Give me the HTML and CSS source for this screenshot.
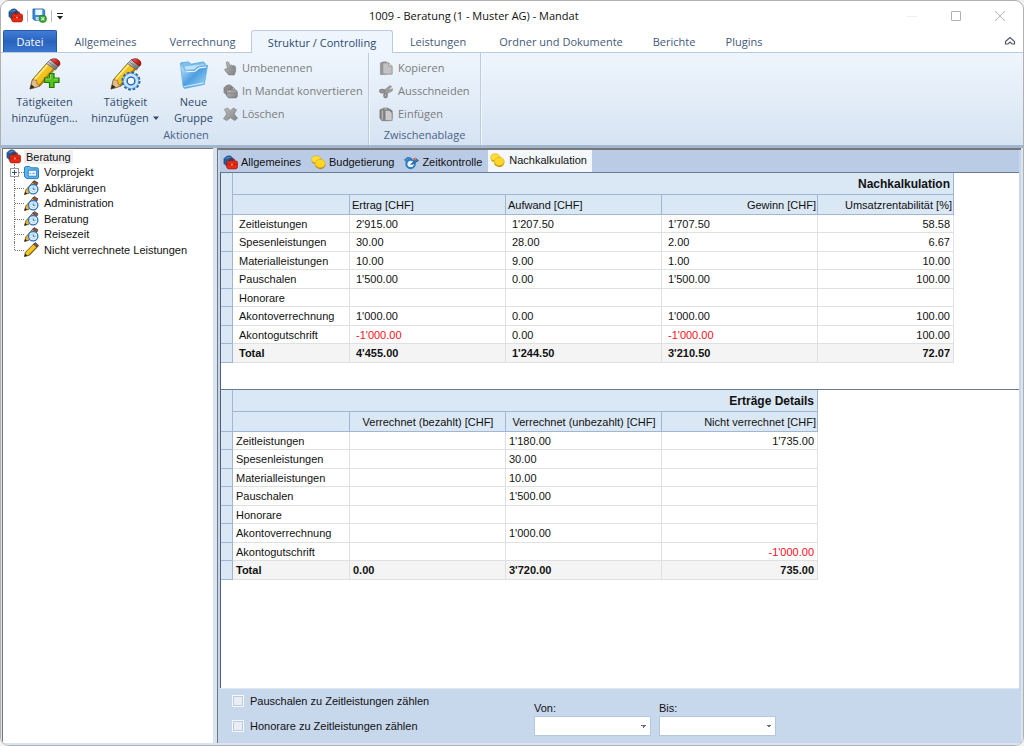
FILE: index.html
```
<!DOCTYPE html>
<html lang="de">
<head>
<meta charset="utf-8">
<title>1009 - Beratung (1 - Muster AG) - Mandat</title>
<link rel="stylesheet" href="styles.css">
</head>
<body>
<svg class="sprite" aria-hidden="true">
  <defs>
    <linearGradient id="g-yellow" x1="0" y1="0" x2="1" y2="1"><stop offset="0" stop-color="#ffe23c"/><stop offset="1" stop-color="#e3a106"/></linearGradient>
    <linearGradient id="g-metal" x1="0" y1="0" x2="1" y2="1"><stop offset="0" stop-color="#f4f4f4"/><stop offset="0.5" stop-color="#9b9b9b"/><stop offset="1" stop-color="#5d5d5d"/></linearGradient>
    <linearGradient id="g-red" x1="0" y1="0" x2="1" y2="1"><stop offset="0" stop-color="#f4776d"/><stop offset="0.5" stop-color="#d3261f"/><stop offset="1" stop-color="#95120e"/></linearGradient>
    <linearGradient id="g-folder" x1="0" y1="0" x2="1" y2="1"><stop offset="0" stop-color="#d3edfc"/><stop offset="0.5" stop-color="#4f9fe2"/><stop offset="1" stop-color="#a9dcfa"/></linearGradient>
    <linearGradient id="g-grey" x1="0" y1="0" x2="1" y2="1"><stop offset="0" stop-color="#bdbdbd"/><stop offset="1" stop-color="#808080"/></linearGradient>
    <symbol id="i-cases" viewBox="0 0 16 16">
      <path d="M1 4 L3 2 L5 1 L8 1 L10 3 L11 5 V10 L5 13 L1 9Z" fill="#1f5d9c" stroke="#123a68" stroke-width=".6"/>
      <path d="M3 3.500L8 2.500" stroke="#6fa8dc" stroke-width=".8"/>
      <path d="M7.500 6.500V5Q7.500 4.200 8.500 4.200h2.500q1 0 1 .9V6.500" fill="none" stroke="#8c1410" stroke-width="1.200"/>
      <path d="M4 7.500 Q4 6.500 5 6.300H14Q15.500 6.500 15.500 8V13Q15 14.800 13.500 14.800H6Q4.500 14.800 4 13Z" fill="#e92b12" stroke="#9c150b" stroke-width=".7"/>
      <path d="M4.500 9.800H15" stroke="#b51a0d"/><path d="M8.500 9.300h2v1.600h-2z" fill="#ff9a83"/>
    </symbol>
    <symbol id="i-pencil" viewBox="0 0 32 32">
      <path d="M1 31 L3.500 21.500 L18 5 L26 11 L11 28Z" fill="url(#g-yellow)" stroke="#6f5310" stroke-width=".8"/>
      <path d="M9.500 27 L24.500 10 L26 11 L11 28Z" fill="#b97d05"/>
      <path d="M5.500 21.500 L19 6.500" stroke="#fff29a" stroke-width="1.200"/>
      <path d="M1 31 L3.500 21.500 L7.500 22.500 L8 26 L11 28Z" fill="#e3c08b" stroke="#76552c" stroke-width=".6"/>
      <path d="M1 31 L2.200 26.500 L5.800 29.300Z" fill="#2b2b2b"/>
      <path d="M17.500 5.500 L21.500 1.500 L29.800 7.500 L26.500 12Z" fill="url(#g-metal)" stroke="#555" stroke-width=".7"/>
      <path d="M19.500 4L28 10.300" stroke="#666" stroke-width=".7"/>
      <path d="M21.500 1.800 Q24 0 27.500 1 Q31.500 3 31 6 Q30.500 8 29.300 8Z" fill="url(#g-red)" stroke="#7e1613" stroke-width=".7"/>
    </symbol>
    <symbol id="i-folder" viewBox="0 0 32 32">
      <path d="M2 3 L10 2 L13 4.500 L26 2 L28 4 L26 26 L7 29Z" fill="#7cc2ef" stroke="#4f9bd2" stroke-width=".8"/>
      <path d="M6 7 L27 4.500 L26 14 L8 16Z" fill="#bfe3f8"/>
      <path d="M1.500 3.500 L7 11 L16 10.500 L20 7 L30.500 5.500 L27 26 L6 30.300 Q4.500 30 4.300 28Z" fill="url(#g-folder)" stroke="#67afe0" stroke-width=".9"/>
      <path d="M7.500 12.500 L17 12 L21 8.500 L29 7.300" fill="none" stroke="#f0faff" stroke-width="1.200"/>
      <path d="M5 28.500L26 24.500" stroke="#d9f1ff"/>
    </symbol>
    <symbol id="i-task" viewBox="0 0 16 16">
      <path d="M0.500 15.500 L2 10.500 L10 1.500 L14 4.500 L5.500 14Z" fill="#e8b53a" stroke="#57451a" stroke-width=".8"/>
      <path d="M9 2.500 L11 .5 L15 3 L13.500 5.500Z" fill="#8a5548" stroke="#43251c" stroke-width=".6"/>
      <circle cx="9.800" cy="9.800" r="5" fill="#e5f3ff" stroke="#2877bf" stroke-width="1.400"/>
      <circle cx="9.800" cy="9.800" r="2.700" fill="none" stroke="#6da6da" stroke-width="1" stroke-dasharray="1 1.100"/>
      <path d="M9.800 8V10H11.500" stroke="#2668a4" fill="none"/>
      <path d="M0.500 15.500 L1.200 12.700 L3.500 14.700Z" fill="#222"/>
    </symbol>
    <symbol id="i-coins" viewBox="0 0 16 16">
      <path d="M1 5V7.500Q2 10 6 9.500L11 6V4Z" fill="#c99608"/>
      <ellipse cx="5.500" cy="4.600" rx="4.700" ry="3.800" fill="#ffdf38" stroke="#d8a60c" stroke-width=".6"/>
      <path d="M4.500 10V12Q6.500 15.600 11 14.800Q15.500 13.500 15.200 9.500Z" fill="#bd8508"/>
      <ellipse cx="9.800" cy="9" rx="5.400" ry="4.500" fill="#ffd52a" stroke="#d8a60c" stroke-width=".6"/>
    </symbol>
    <symbol id="i-clockcheck" viewBox="0 0 16 16">
      <path d="M.5 5L4 2.500L8 3.500L8 6L3 8Z" fill="#4a90cb" stroke="#235f98" stroke-width=".8"/>
      <circle cx="7" cy="9.500" r="4.500" fill="#eaf6ff" stroke="#2a7ec4" stroke-width="2.200"/>
      <path d="M7 10L13.500 4L15.500 6L10 9.500Z" fill="#3d77b0" stroke="#264f7c" stroke-width=".6"/>
      <path d="M9.500 4L12.500 2.500L11.500 6Z" fill="#e85030"/>
    </symbol>
  </defs>
</svg>

<div class="window">
  <header class="titlebar">
    <div class="quick">
      <svg class="ic16"><use href="#i-cases"/></svg>
      <span class="qsep"></span>
      <button class="plain" aria-label="Speichern und schliessen">
        <svg class="ic16" viewBox="0 0 16 16"><path d="M1 1H12L13.500 2.500V13H2.500L1 11.500Z" fill="#3b8bdc" stroke="#1c5695" stroke-width=".8"/><path d="M3.500 1.500h7.500v6H3.500z" fill="#e9f5ff"/><path d="M4 9.500h6v3.500H4z" fill="#bed8ef"/><circle cx="11.500" cy="11.500" r="4" fill="#35a535" stroke="#1f7b22" stroke-width=".7"/><path d="M9.800 9.800l3.400 3.400m0-3.400l-3.400 3.400" stroke="#d9f5d5" stroke-width="1.200"/></svg>
      </button>
      <span class="qsep"></span>
      <button class="plain" aria-label="Schnellzugriff anpassen"><svg class="ic8" viewBox="0 0 8 8"><path d="M1 1.500h6" stroke="#222"/><path d="M1 4h6L4 7.500z" fill="#222"/></svg></button>
    </div>
    <h1 class="title">1009 - Beratung (1 - Muster AG) - Mandat</h1>
    <div class="winbtns">
      <button class="plain" aria-label="Minimieren"><svg class="ic12" viewBox="0 0 12 12"><path d="M1 6.500h10" stroke="#eee"/></svg></button>
      <button class="plain" aria-label="Maximieren"><svg class="ic12" viewBox="0 0 12 12"><rect x="1.500" y="1.500" width="9" height="9" rx=".5" fill="none" stroke="#b0b0b0"/></svg></button>
      <button class="plain" aria-label="Schliessen"><svg class="ic12" viewBox="0 0 12 12"><path d="M1 1l10 10M11 1L1 11" stroke="#b5b5b5"/></svg></button>
    </div>
  </header>

  <nav class="tabs">
    <button class="tab file">Datei</button>
    <button class="tab w-l">Allgemeines</button>
    <button class="tab w-l">Verrechnung</button>
    <button class="tab w-xl active">Struktur / Controlling</button>
    <button class="tab w-m">Leistungen</button>
    <button class="tab w-xxl">Ordner und Dokumente</button>
    <button class="tab w-s">Berichte</button>
    <button class="tab w-s">Plugins</button>
    <button class="plain collapse" aria-label="Menüband minimieren"><svg class="ic12" viewBox="0 0 12 12"><path d="M1.500 6.500L6 2.500L10.500 6.500V9H8L6 7L4 9H1.500Z" fill="#fff" stroke="#4e5a6b" stroke-width="1.200"/></svg></button>
  </nav>

  <section class="ribbon">
    <div class="group actions">
      <div class="group-body">
        <button class="big b-wide">
          <svg class="ic34" viewBox="0 0 34 34"><use href="#i-pencil" width="32" height="32" x="1"/><path d="M21.500 15.500h4.500v4.500h5v4.500h-5v5h-4.500v-5h-5v-4.500h5z" fill="#52c51d" stroke="#237305" stroke-width="1.200"/><path d="M22.500 16.500v4.500h-5M26 21h4" fill="none" stroke="#9ae868" stroke-width=".8"/></svg>
          <span>Tätigkeiten<br>hinzufügen...</span>
        </button>
        <button class="big b-wide">
          <svg class="ic34" viewBox="0 0 34 34"><use href="#i-pencil" width="32" height="32" x="1"/><circle cx="22" cy="23" r="8" fill="#f1f8ff" stroke="#245f9f" stroke-width="3" stroke-dasharray="2.600 1.589"/><circle cx="22" cy="23" r="5.800" fill="none" stroke="#5ea5e4" stroke-width="4.400"/><circle cx="22" cy="23" r="6" fill="none" stroke="#cbe6fb" stroke-width="2.400"/><circle cx="22" cy="23" r="3.700" fill="#f3f6fa" stroke="#235f9f" stroke-width="1.100"/></svg>
          <span>Tätigkeit<br>hinzufügen <svg class="ic8" viewBox="0 0 8 8"><path d="M1 2.500h6L4 6z" fill="#2f486c"/></svg></span>
        </button>
        <button class="big b-narrow">
          <svg class="ic34" viewBox="0 0 34 34"><use href="#i-folder" width="30" height="32" x="2" y="1"/></svg>
          <span>Neue<br>Gruppe</span>
        </button>
        <div class="small-list">
          <button class="small" disabled><svg class="ic16" viewBox="0 0 16 16"><path d="M3.500 1.500Q4.500 0 6 1.500L7.500 5L9 4.200L10.500 5L12 4.800L13.500 6.500V11L12 14.800H6L2 10Q1.500 8.500 3 8L5 9Z" fill="url(#g-grey)" stroke="#808080" stroke-width=".7"/><path d="M8 5.500v3M10.300 5.500v3M12 6v2.500" stroke="#7d7d7d" stroke-width=".6"/></svg>Umbenennen</button>
          <button class="small" disabled><svg class="ic16" viewBox="0 0 16 16"><path d="M1 4L3 2L5 1L8 1L10 3L11 10L5 13L1 9Z" fill="#8c8c8c" stroke="#777" stroke-width=".6"/><path d="M7.500 6.500V5q0-1 1-1h2.500q1 0 1 1v1.500" fill="none" stroke="#777"/><path d="M4 7.500Q4 6.500 5 6.300H13.500Q15.300 7 15.300 9V13L14 14.800H6L4 13Z" fill="url(#g-grey)" stroke="#777" stroke-width=".7"/><path d="M4.500 9.800H15" stroke="#808080"/></svg>In Mandat konvertieren</button>
          <button class="small" disabled><svg class="ic16" viewBox="0 0 16 16"><path d="M1.500 2.500L5 1L8 4L11 1L14.500 3L12 7.500L15.500 12L12.500 14.500L8 11.500L4 14.500L.5 12.500L4 7.500Z" fill="url(#g-grey)" stroke="#858585" stroke-width=".7"/></svg>Löschen</button>
        </div>
      </div>
      <div class="group-name">Aktionen</div>
    </div>
    <div class="group clipboard">
      <div class="group-body">
        <div class="small-list">
          <button class="small" disabled><svg class="ic16" viewBox="0 0 16 16"><path d="M1.500 2Q5 .5 8 1V14L1.500 14.500Z" fill="#9a9a9a" stroke="#888" stroke-width=".7"/><path d="M4 2H10.500L14 5.500V14H4Z" fill="#c3c3c3" stroke="#888" stroke-width=".8"/><path d="M10.500 2v3.500h3.500" fill="#eee" stroke="#888" stroke-width=".8"/></svg>Kopieren</button>
          <button class="small" disabled><svg class="ic16" viewBox="0 0 16 16"><path d="M5.500 6.500L12 1.500L13.500 3L9 7L14.500 5L14 7.500L8 10.500Z" fill="#a0a0a0" stroke="#808080" stroke-width=".6"/><ellipse cx="3.500" cy="7.500" rx="2.400" ry="1.500" fill="#bbb" stroke="#888" stroke-width="2"/><ellipse cx="7" cy="12" rx="1.500" ry="2.300" fill="#bbb" stroke="#888" stroke-width="2"/></svg>Ausschneiden</button>
          <button class="small" disabled><svg class="ic16" viewBox="0 0 16 16"><path d="M1 3L5 1.500H10L14 4V12L10 14.500H3L1 12Z" fill="#858585" stroke="#6c6c6c" stroke-width=".7"/><path d="M3.500 3.500v10" stroke="#ccc"/><path d="M6.500 3.500H11L14 6.500V14.500H6.500Z" fill="#cbcbcb" stroke="#777" stroke-width=".7"/><path d="M5 1h4v2.500H5z" fill="#aaa" stroke="#777" stroke-width=".5"/></svg>Einfügen</button>
        </div>
      </div>
      <div class="group-name">Zwischenablage</div>
    </div>
  </section>

  <main class="content">
    <aside class="tree">
      <div class="root"><svg class="ic14"><use href="#i-cases"/></svg><span class="root-label">Beratung</span></div>
      <ul class="nodes">
        <li><svg class="expander" viewBox="0 0 9 9"><rect x=".5" y=".5" width="8" height="8" fill="#fff" stroke="#999"/><path d="M2 4.500h5M4.500 2v5" stroke="#33507c"/></svg><svg class="ic14" viewBox="0 0 16 16"><path d="M.5 3Q.5 2 2 1.500H6L7.500 3H14Q15.500 3 15.500 5V13Q15.500 14.500 14 14.500H3L.5 12.500Z" fill="#62b5ed" stroke="#1e76bd"/><path d="M4.500 5.500H13.500v6.500H4.500z" fill="#e9f6ff" stroke="#2980cc"/><path d="M6 9h1.500M9 9h2.500" stroke="#5a8fe0"/></svg>Vorprojekt</li>
        <li><svg class="ic14"><use href="#i-task"/></svg>Abklärungen</li>
        <li><svg class="ic14"><use href="#i-task"/></svg>Administration</li>
        <li><svg class="ic14"><use href="#i-task"/></svg>Beratung</li>
        <li><svg class="ic14"><use href="#i-task"/></svg>Reisezeit</li>
        <li><svg class="ic14" viewBox="0 0 16 16"><path d="M.5 15.500L1.500 11L11 1.500L15 4.500L6 14Z" fill="#f3c824" stroke="#5b4a14" stroke-width=".9"/><path d="M5 14L14 5" stroke="#7a5a10"/><path d="M10 2.500L12 .5L15.500 3.500L13.800 5.500Z" fill="#7a5a4a" stroke="#3b241a" stroke-width=".6"/><path d="M.5 15.500L1.200 12.500L3.600 14.700Z" fill="#222"/></svg>Nicht verrechnete Leistungen</li>
      </ul>
    </aside>

    <section class="panel">
      <nav class="subtabs">
        <button class="subtab"><svg class="ic16"><use href="#i-cases"/></svg>Allgemeines</button>
        <button class="subtab"><svg class="ic16"><use href="#i-coins"/></svg>Budgetierung</button>
        <button class="subtab"><svg class="ic16"><use href="#i-clockcheck"/></svg>Zeitkontrolle</button>
        <button class="subtab current"><svg class="ic16"><use href="#i-coins"/></svg>Nachkalkulation</button>
      </nav>

      <div class="sheet first">
        <table class="grid summary">
          <colgroup><col class="c-sel"><col class="c-name"><col class="c-val"><col class="c-val"><col class="c-val"><col class="c-pct"></colgroup>
          <thead>
            <tr class="band"><th rowspan="2"></th><th colspan="5">Nachkalkulation</th></tr>
            <tr class="heads"><th></th><th>Ertrag [CHF]</th><th>Aufwand [CHF]</th><th class="r">Gewinn [CHF]</th><th class="r">Umsatzrentabilität [%]</th></tr>
          </thead>
          <tbody>
            <tr><th></th><td>Zeitleistungen</td><td>2'915.00</td><td>1'207.50</td><td>1'707.50</td><td class="r">58.58</td></tr>
            <tr><th></th><td>Spesenleistungen</td><td>30.00</td><td>28.00</td><td>2.00</td><td class="r">6.67</td></tr>
            <tr><th></th><td>Materialleistungen</td><td>10.00</td><td>9.00</td><td>1.00</td><td class="r">10.00</td></tr>
            <tr><th></th><td>Pauschalen</td><td>1'500.00</td><td>0.00</td><td>1'500.00</td><td class="r">100.00</td></tr>
            <tr><th></th><td>Honorare</td><td></td><td></td><td></td><td></td></tr>
            <tr><th></th><td>Akontoverrechnung</td><td>1'000.00</td><td>0.00</td><td>1'000.00</td><td class="r">100.00</td></tr>
            <tr><th></th><td>Akontogutschrift</td><td class="neg">-1'000.00</td><td>0.00</td><td class="neg">-1'000.00</td><td class="r">100.00</td></tr>
            <tr class="total"><th></th><td>Total</td><td>4'455.00</td><td>1'244.50</td><td>3'210.50</td><td class="r">72.07</td></tr>
          </tbody>
        </table>
      </div>

      <div class="sheet second">
        <table class="grid details">
          <colgroup><col class="c-sel"><col class="c-name"><col class="c-val"><col class="c-val"><col class="c-val"></colgroup>
          <thead>
            <tr class="band"><th rowspan="2"></th><th colspan="4">Erträge Details</th></tr>
            <tr class="heads"><th></th><th class="c">Verrechnet (bezahlt) [CHF]</th><th class="c">Verrechnet (unbezahlt) [CHF]</th><th class="r">Nicht verrechnet [CHF]</th></tr>
          </thead>
          <tbody>
            <tr><th></th><td>Zeitleistungen</td><td></td><td>1'180.00</td><td class="r">1'735.00</td></tr>
            <tr><th></th><td>Spesenleistungen</td><td></td><td>30.00</td><td></td></tr>
            <tr><th></th><td>Materialleistungen</td><td></td><td>10.00</td><td></td></tr>
            <tr><th></th><td>Pauschalen</td><td></td><td>1'500.00</td><td></td></tr>
            <tr><th></th><td>Honorare</td><td></td><td></td><td></td></tr>
            <tr><th></th><td>Akontoverrechnung</td><td></td><td>1'000.00</td><td></td></tr>
            <tr><th></th><td>Akontogutschrift</td><td></td><td></td><td class="r neg">-1'000.00</td></tr>
            <tr class="total"><th></th><td>Total</td><td>0.00</td><td>3'720.00</td><td class="r">735.00</td></tr>
          </tbody>
        </table>
      </div>

      <form class="options">
        <div class="checks">
          <label class="check"><input type="checkbox">Pauschalen zu Zeitleistungen zählen</label>
          <label class="check"><input type="checkbox">Honorare zu Zeitleistungen zählen</label>
        </div>
        <div class="field"><label for="von">Von:</label><select id="von"><option></option></select></div>
        <div class="field"><label for="bis">Bis:</label><select id="bis"><option></option></select></div>
      </form>
    </section>
  </main>
</div>
</body>
</html>
```

FILE: styles.css
```
* { box-sizing: border-box; }

body {
  margin: 0;
  background: #f1f1f1;
  font: 11px/14px "Liberation Sans", Arial, sans-serif;
  color: #111;
}

button { font: inherit; color: inherit; border: 0; background: none; padding: 0; }
.sprite { position: absolute; width: 0; height: 0; }
.ic8 { width: 8px; height: 8px; }
.ic12 { width: 12px; height: 12px; }
.ic14 { width: 15px; height: 15px; }
.ic16 { width: 15px; height: 15px; }
.ic34 { width: 34px; height: 34px; }
svg { flex: none; }
.plain { display: flex; align-items: center; }

.window {
  display: flex;
  flex-direction: column;
  height: 100vh;
  border: 1px solid #b0b0b0;
  border-radius: 9px;
  overflow: hidden;
  background: #fff;
}

/* Title bar */
.titlebar {
  display: grid;
  grid-template-columns: 361px auto 1fr;
  align-items: center;
  height: 29px;
  padding: 0 17px 0 7px;
}
.quick { display: flex; align-items: center; gap: 4px; }
.qsep { width: 1px; height: 12px; background: #bbb; }
.title { margin: 0; font: 11px/16px "Open Sans", "Noto Sans", sans-serif; }
.winbtns { display: flex; justify-content: flex-end; gap: 32px; }

/* Ribbon tabs */
.tabs {
  display: flex;
  height: 23px;
  padding: 0 7px 0 2px;
  border-bottom: 1px solid #b9cbe0;
  font: 11px/24px "Open Sans", "Noto Sans", sans-serif;
  color: #45597a;
}
.tab { text-align: center; white-space: nowrap; }
.file {
  width: 54px;
  color: #fff;
  background: linear-gradient(#3f7dd6, #2a63bd 50%, #3a78d0);
  border: 1px solid #2458a8;
  border-bottom: 0;
  border-radius: 2px 2px 0 0;
  line-height: 21px;
}
.w-s { width: 70px; }
.w-m { width: 90px; }
.w-l { width: 97px; }
.w-xl { width: 142px; }
.w-xxl { width: 156px; }
.active {
  height: 23px;
  background: #eef5fd;
  border: 1px solid #b9cbe0;
  border-bottom: 0;
  border-radius: 3px 3px 0 0;
  color: #2c4a74;
}
.collapse { margin-left: auto; }

/* Ribbon */
.ribbon {
  display: flex;
  height: 95px;
  padding-left: 3px;
  background: linear-gradient(#eef5fd, #e3edf8 50%, #d6e3f2);
  border-bottom: 3px solid #a1b5ce;
  font: 11px/16px "Open Sans", "Noto Sans", sans-serif;
  color: #2f486c;
}
.group {
  display: flex;
  flex-direction: column;
  border-right: 1px solid #bccbe0;
  box-shadow: 1px 0 #f2f7fd;
}
.actions { width: 365px; }
.clipboard { width: 112px; }
.group-body { display: flex; height: 74px; }
.group-name { text-align: center; color: #4a638a; }
.big { display: flex; flex-direction: column; align-items: center; gap: 2px; padding-top: 5px; white-space: nowrap; }
.b-wide { width: 81px; }
.b-narrow { width: 55px; }
.small-list { display: flex; flex-direction: column; gap: 7px; padding: 7px 0 0 2px; }
.clipboard .small-list { padding-left: 10px; }
.small { display: flex; align-items: center; gap: 4px; height: 16px; color: #7c7c7c; white-space: nowrap; }

/* Content */
.content {
  display: grid;
  grid-template-columns: 211px 1fr;
  gap: 4px;
  flex: 1;
  min-height: 0;
  padding: 0 2px 2px 1px;
  background: #d9e4f2;
}
.tree { border: solid #777; border-width: 1px 0 0 1px; background: #fff; padding-left: 3px; }
.root { display: flex; align-items: center; gap: 3px; height: 15px; }
.root-label { padding: 0 2px; background: #f0f0f0; }
.nodes { list-style: none; margin: 0; padding: 0; }
.nodes li {
  position: relative;
  display: flex;
  align-items: center;
  gap: 5px;
  height: 15px;
  padding-left: 18px;
}
.nodes li:nth-child(odd) { height: 16px; }
.nodes li::before {
  content: "";
  position: absolute;
  left: 8px;
  top: 0;
  bottom: 0;
  border-left: 1px dotted #777;
}
.nodes li:last-child::before { bottom: 50%; }
.nodes li::after {
  content: "";
  position: absolute;
  left: 9px;
  top: 50%;
  width: 9px;
  border-top: 1px dotted #777;
}
.expander { position: absolute; z-index: 1; left: 4px; top: 4px; width: 9px; height: 9px; }

.panel {
  display: flex;
  flex-direction: column;
  min-width: 0;
  padding: 0 2px 0 2px;
  border: solid #777;
  border-width: 2px 0 0 1px;
  background: #c7d7ec;
}
.subtabs { display: flex; height: 22px; padding-left: 3px; background: #bacbe5; }
.subtab { display: flex; align-items: center; gap: 3px; margin-right: 10px; padding-top: 2px; }
.current { margin: 0; margin-left: -4px; padding: 0 5px 2px 2px; gap: 4px; background: #f4f8fd; }

.sheet { background: #fff; border-top: 1px solid #6a7a90; border-left: 1px solid #4d5f7c; }
.first { height: 217px; }
.second { flex: 1; }

.grid { border-collapse: separate; border-spacing: 0; table-layout: fixed; }
.summary { width: 733px; }
.details { width: 597px; }
.c-sel { width: 12px; }
.c-name { width: 117px; }
.c-val { width: 156px; }
.c-pct { width: 136px; }
.grid th, .grid td { padding: 0 6px; text-align: left; white-space: nowrap; border: solid #dfe0e2; border-width: 0 1px 1px 0; line-height: 14px; }
.grid th { background: #dae7f5; border-color: #a4b5d3; font-weight: normal; }
.grid .band { height: 22px; }
.grid .band th { padding-right: 3px; text-align: right; font-size: 12px; font-weight: bold; }
.grid .heads { height: 20px; }
.grid .heads th { padding: 0 1px 0 2px; }
.grid tbody tr { height: 18px; }
.grid tbody tr:nth-child(even) { height: 19px; }
.grid .r, .grid .heads .r { text-align: right; }
.grid .heads .c { text-align: center; }
.grid td.r { padding-right: 3px; }
.details td { padding-left: 3px; }
.neg { color: #fb0d22; }
.total td { background: #f4f4f4; font-weight: bold; }

/* Options */
.options { display: flex; height: 55px; padding: 5px 0 0 12px; border-top: 1px solid #dfe7f2; }
.checks { display: flex; flex-direction: column; gap: 11px; width: 302px; }
.check { display: flex; align-items: center; gap: 6px; height: 14px; }
.check input { appearance: none; width: 12px; height: 12px; margin: 0; background: #e9eef4; border: 1px solid #f7f9fc; outline: 1px solid #bccbdf; outline-offset: -2px; }
.field { display: flex; flex-direction: column; gap: 1px; width: 117px; margin: 7px 8px 0 0; }
.field select {
  appearance: none;
  width: 100%;
  height: 20px;
  border: 1px solid #b4c7e2;
  border-radius: 0;
  background:
    linear-gradient(to bottom right, #66707d 50%, transparent 50%) right 3px center / 3px 3px no-repeat,
    linear-gradient(to bottom left, #66707d 50%, transparent 50%) right 6px center / 3px 3px no-repeat,
    #fff;
}
```
